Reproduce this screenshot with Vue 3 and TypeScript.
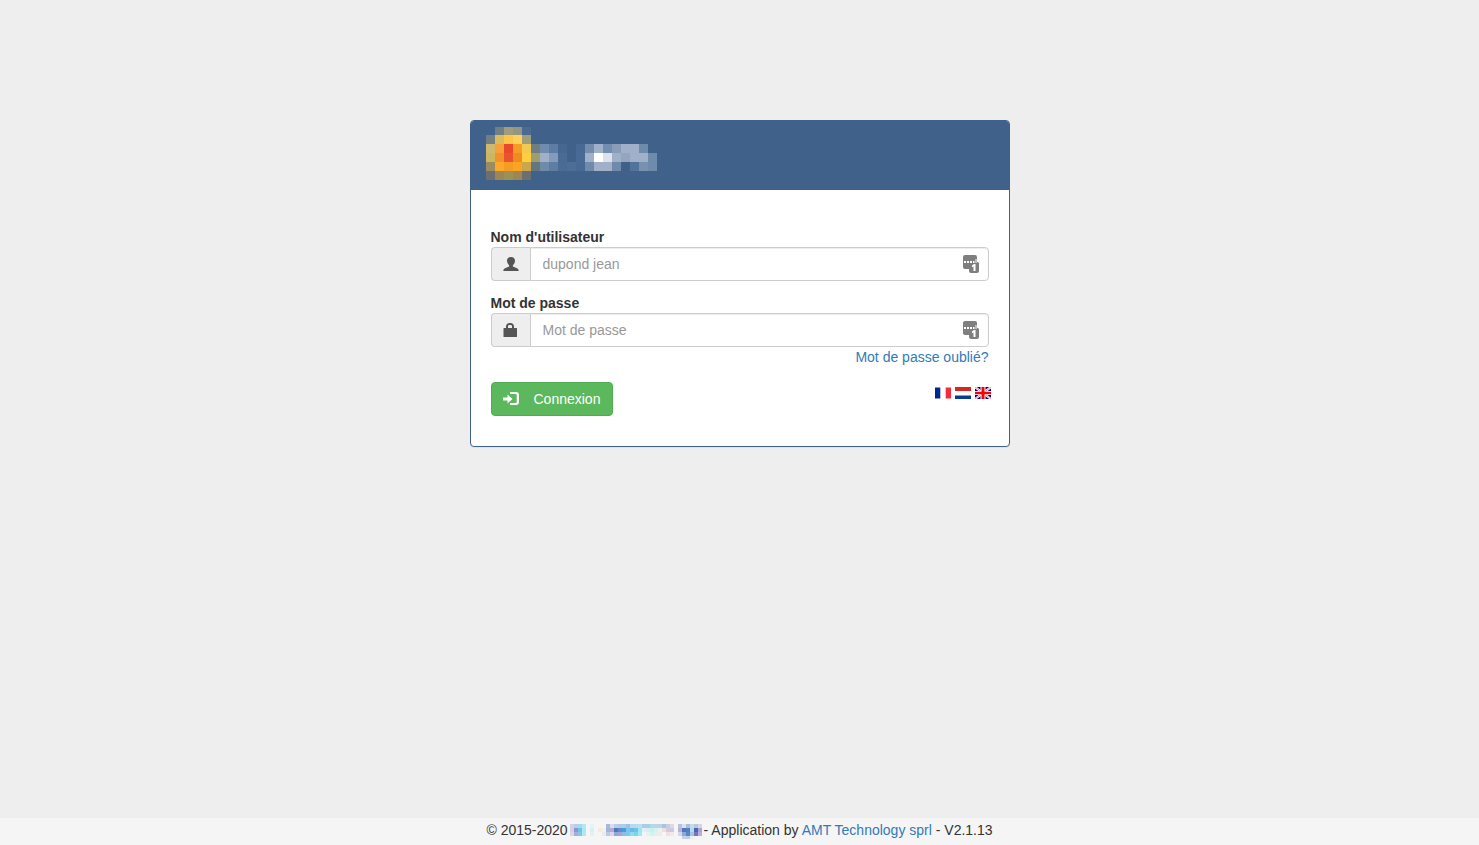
<script setup lang="ts">
import { ref } from 'vue'

interface Tile {
  x: number
  y: number
  fill: string
}

const username = ref('')
const password = ref('')

function toTiles(rows: string[], size: number): Tile[] {
  return rows.flatMap((row, r) =>
    row
      .split(' ')
      .map((c, i) => ({ x: i * size, y: r * size, fill: '#' + c }))
      .filter((t) => t.fill !== '#-')
  )
}

const logoTiles = toTiles(
  [
    '- 6f8085 a19d7c 929783 4b6b90',
    '6f7f82 d9bb60 ffc548 ffd159 a09e7a',
    'd0b96c f8a03a e8482c f69b25 f2ca50 6f7f80 6f8cad 5d7da4 456790 - 486993 728dad a0b0c8 728dad 899db9 a0b0c8 a0b0c8 6f8bac -',
    'cdb660 f3912f e8542c f08b23 ffce3b a09c72 a0b0c8 859bbb 4a6b94 - 486a94 a0b0c8 ffffff dce2ea a0b0c8 93a6bf a0b0c8 a0b0c8 6f8bac',
    '9c8a61 faa92a f49c26 f8a524 caa74b 64777f 6f8bac 5d7da2 4a6b94 4c6e97 486993 6f8bac a0b0c8 a0b0c8 6f8bac 3f6189 52749b 7891b0 6f8bac',
    '6d6e71 9b8656 9b9155 9b8654 6d6e71',
  ],
  9
)

const ownerTiles = toTiles(
  [
    'd5d1e5 b7cfe8 a8d8ed b4e7f3 - e6f3f4 - - - a6b8dc d7ddec b5d1e8 b4c8e2 a8cfe9 a3bee1 b6d9ed b9dcec b7e1f0 a9cde2 a7cfe6 b4d9e6 b6d7e6 bfd2e3 a9c5de c1d2e4 e7d6dd - b6c2de d5e4f0 a7bedc c3dcec b8c8df d7d4e8',
    'd5cfe4 8998cf 71c2e5 a9e8f5 - d9f0f3 - f6e8e3 f4f0ed 9eb6dc b5a9d0 5276bb 5b8fcc 4d9bd8 76c7ec 6cb8e6 67c6ed 9be5f4 e6edf4 d6edf3 c8f0f1 d6f2ef ecf2f2 ecdfe4 d8c8d8 c2cee4 - b4b3d7 5277be 5a7bc1 b2dbec 4f64b1 aaa4d2',
    'dbd5e8 a7aed9 86c5e7 ade9f4 - dff3f5 - - f3e8e5 b2cde7 dbd5e8 8ea9d5 a3a5d2 93bbdf 79caec 91d8f0 75d7ed a4e8f2 f1f5f5 e7f3f3 d3f2f0 def3ef f4e9e8 - efe0e4 f2e9ea - d7d5e8 8bacdb 5d86c6 9ec9e6 7c73b7 b8b0d9',
    '- - - - - - - - - - - - - - - - - - - - - - - - - - - - c1d5ea d2c7e1 e7f1f5',
  ],
  4
)
</script>

<template>
  <div class="page">
    <main>
      <section class="panel">
        <header class="panel-head">
          <svg class="logo" width="171" height="53" viewBox="0 1 171 53" shape-rendering="crispEdges" aria-hidden="true">
            <rect v-for="(t, i) in logoTiles" :key="i" :x="t.x" :y="t.y" width="9" height="9" :fill="t.fill" />
          </svg>
        </header>
        <form class="panel-body" @submit.prevent>
          <div class="field">
            <label for="username">Nom d'utilisateur</label>
            <div class="group">
              <span class="addon">
                <svg width="16" height="14" viewBox="0 0 16 14" fill="#555" aria-hidden="true">
                  <path d="M8 0C5.500 0 4 1.500 4 3.800C4 5.600 4.900 7.300 6.100 8.200V9.600L2 11.200C.9 11.700.4 12.500.3 14H15.700C15.600 12.500 15.100 11.700 14 11.200L9.900 9.600V8.200C11.100 7.300 12 5.600 12 3.800C12 1.500 10.500 0 8 0Z" />
                </svg>
              </span>
              <input id="username" v-model="username" type="text" placeholder="dupond jean" />
              <svg class="manager" width="16" height="18" viewBox="0 0 16 18" aria-hidden="true">
                <path fill="#7f7f7f" d="M2 0H12Q14 0 14 2V7H14.500Q16 7 16 8.500V16Q16 18 14 18H8Q6 18 6 16V14H2Q0 14 0 12V2Q0 0 2 0Z" />
                <path fill="#fff" d="M1 6H3V8H1ZM4 6H6V8H4ZM7 6H9V8H7ZM10 6H11.500V8H10ZM12.500 4H13.500V8H12.500ZM9 10.500L11 9H12.500V16H10.500V11.500L9 12.300Z" />
              </svg>
            </div>
          </div>
          <div class="field">
            <label for="password">Mot de passe</label>
            <div class="group">
              <span class="addon">
                <svg width="16" height="14" viewBox="0 0 16 14" aria-hidden="true">
                  <path fill="#555" fill-rule="evenodd" d="M3 5V3.500C3 1.500 4.500 0 6.500 0H7.500C9.500 0 11 1.500 11 3.500V5H13.500Q14 5 14 5.500V13.500Q14 14 13.500 14H1Q.5 14 .5 13.500V5.500Q.5 5 1 5ZM5 5H9V3.500C9 2.500 8.500 2 7.500 2H6.500C5.500 2 5 2.500 5 3.500Z" />
                </svg>
              </span>
              <input id="password" v-model="password" type="password" placeholder="Mot de passe" />
              <svg class="manager" width="16" height="18" viewBox="0 0 16 18" aria-hidden="true">
                <path fill="#7f7f7f" d="M2 0H12Q14 0 14 2V7H14.500Q16 7 16 8.500V16Q16 18 14 18H8Q6 18 6 16V14H2Q0 14 0 12V2Q0 0 2 0Z" />
                <path fill="#fff" d="M1 6H3V8H1ZM4 6H6V8H4ZM7 6H9V8H7ZM10 6H11.500V8H10ZM12.500 4H13.500V8H12.500ZM9 10.500L11 9H12.500V16H10.500V11.500L9 12.300Z" />
              </svg>
            </div>
            <a class="forgot" href="#">Mot de passe oublié?</a>
          </div>
          <div class="actions">
            <button type="submit">
              <svg width="16" height="14" viewBox="0 0 16 14" fill="#fff" aria-hidden="true">
                <path d="M0 5.500H4.500V2.500L9.500 7L4.500 11.500V8.500H0Z" />
                <path d="M7 0H13Q16 0 16 3V10Q16 13 13 13H7V11H12.500Q13.700 11 13.700 9.800V3.200Q13.700 2 12.500 2H7Z" />
              </svg>
              <span>Connexion</span>
            </button>
            <nav class="langs">
              <a href="#" aria-label="Français">
                <svg width="16" height="12" viewBox="0 0 16 12" aria-hidden="true">
                  <path fill="#fff" d="M0 0H16V12H0Z" />
                  <path fill="#00268f" d="M0 .5H5.300V11.500H0Z" />
                  <path fill="#f52b3d" d="M10.700 .5H16V11.500H10.700Z" />
                </svg>
              </a>
              <a href="#" aria-label="Nederlands">
                <svg width="16" height="12" viewBox="0 0 16 12" aria-hidden="true">
                  <path fill="#fff" d="M0 0H16V12H0Z" />
                  <path fill="#d7281f" d="M0 0H16V4H0Z" />
                  <path fill="#083d8c" d="M0 8.500H16V12H0Z" />
                </svg>
              </a>
              <a href="#" aria-label="English">
                <svg width="16" height="12" viewBox="0 0 16 12" aria-hidden="true">
                  <path fill="#00008f" d="M0 0H16V12H0Z" />
                  <path stroke="#fff" stroke-width="2.200" d="M0 0L16 12M16 0L0 12" />
                  <path stroke="#f04040" stroke-width=".6" d="M0 0L16 12M16 0L0 12" />
                  <path fill="#fff" d="M5.500 0H10.500V12H5.500ZM0 4H16V8H0Z" />
                  <path fill="#fa0000" d="M6.500 0H9.500V12H6.500ZM0 4.700H16V7.300H0Z" />
                </svg>
              </a>
            </nav>
          </div>
        </form>
      </section>
    </main>
    <footer>
      <span>© 2015-2020</span>
      <svg class="owner" width="132" height="15" viewBox="0 0 132 15" shape-rendering="crispEdges" aria-hidden="true">
        <rect v-for="(t, i) in ownerTiles" :key="i" :x="t.x" :y="t.y" width="4" height="4" :fill="t.fill" />
      </svg>
      <span>- Application by <a href="#">AMT Technology sprl</a> - V2.1.13</span>
    </footer>
  </div>
</template>

<style>
body {
  margin: 0;
  background: #eee;
}
</style>

<style scoped>
.page,
.page * {
  box-sizing: border-box;
}
.page {
  min-height: 100vh;
  display: flex;
  flex-direction: column;
  background: #eee;
  color: #333;
  font: 14px/20px "Liberation Sans", Arial, sans-serif;
}
svg {
  display: block;
  flex: none;
}
a {
  color: #337ab7;
  text-decoration: none;
}
main {
  flex: 1;
  padding: 120px 16px 40px;
}
.panel {
  max-width: 540px;
  margin: 0 auto;
  background: #fff;
  border: 1px solid #40628a;
  border-radius: 4px;
  overflow: hidden;
  box-shadow: 0 1px 1px rgba(0, 0, 0, 0.05);
}
.panel-head {
  padding: 6px 15px 10px;
  background: #40628a;
}
.panel-body {
  padding: 37px 20px 30px;
}
.field {
  display: flex;
  flex-direction: column;
  margin-bottom: 12px;
}
label {
  font-weight: bold;
}
.group {
  position: relative;
  display: flex;
  height: 34px;
}
.addon {
  width: 39px;
  display: flex;
  align-items: center;
  justify-content: center;
  background: #eee;
  border: 1px solid #ccc;
  border-right: 0;
  border-radius: 4px 0 0 4px;
}
input {
  flex: 1;
  min-width: 0;
  padding: 6px 40px 6px 12px;
  border: 1px solid #ccc;
  border-radius: 0 4px 4px 0;
  background: #fff;
  box-shadow: inset 0 1px 1px rgba(0, 0, 0, 0.075);
  color: #555;
  font: inherit;
}
input::placeholder {
  color: #999;
  opacity: 1;
}
.manager {
  position: absolute;
  right: 10px;
  top: 8px;
}
.forgot {
  align-self: flex-end;
}
.actions {
  display: flex;
  justify-content: space-between;
  align-items: flex-start;
  margin-top: 15px;
}
button {
  display: flex;
  align-items: center;
  gap: 15px;
  height: 34px;
  padding: 6px 12px 6px 11px;
  border: 1px solid #4cae4c;
  border-radius: 4px;
  background: #5cb85c;
  color: #fff;
  font: inherit;
  cursor: pointer;
}
.langs {
  display: flex;
  gap: 4px;
  margin: 5px -2px 0 0;
}
footer {
  display: flex;
  justify-content: center;
  padding: 2px 0 5px;
  background: #f5f5f5;
}
.owner {
  margin: 4px 2px 0;
}
</style>
